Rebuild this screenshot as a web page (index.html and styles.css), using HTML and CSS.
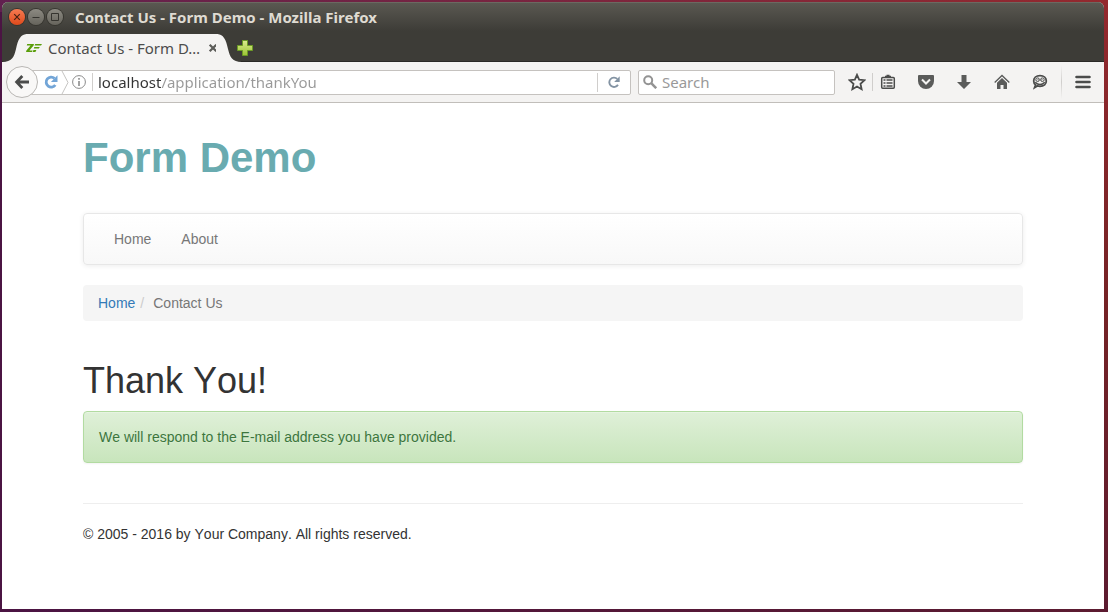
FILE: index.html
```html
<!DOCTYPE html>
<html lang="en">
<head>
<meta charset="utf-8">
<title>Contact Us - Form Demo</title>
<link rel="stylesheet" href="styles.css">
</head>
<body>
<div class="window">
  <header class="chrome">
    <div class="titlebar">
      <button class="wm wm-close" aria-label="Close window"><svg width="16" height="16" viewBox="0 0 16 16"><path d="M5.2 5.2l5.6 5.6M10.8 5.2l-5.6 5.6" stroke="#4a2213" stroke-width="1.2"/></svg></button>
      <button class="wm" aria-label="Minimize"><svg width="16" height="16" viewBox="0 0 16 16"><path d="M4.500 8.500h7" stroke="#35342f"/></svg></button>
      <button class="wm" aria-label="Maximize"><svg width="16" height="16" viewBox="0 0 16 16"><path d="M4.500 4.500h7v7h-7z" fill="none" stroke="#35342f"/></svg></button>
      <span class="window-title">Contact Us - Form Demo - Mozilla Firefox</span>
    </div>
    <div class="tabs">
      <svg width="26" height="28" viewBox="0 0 26 28"><path d="M0 28C10 28 12 23 14 15C16 6 18 0 26 0V28Z" fill="#f4f3f2"/></svg>
      <div class="tab">
        <svg width="16" height="10" viewBox="0 0 16 10"><g fill="#5a9e0a"><path d="M1.2 1H8L7.6 2.600 3.400 7.400h3.2l-.5 1.600H0l.4-1.600 4.200-4.800H.8z"/><path d="M9.2 1H16l-1 1.600H8.6zM8.3 4h5.5l-1 1.600H7.8zM7.4 7h3l-1 2H6.8z"/></g></svg>
        <span class="tab-title">Contact Us - Form D…</span>
        <button class="icon-button" aria-label="Close tab"><svg width="10" height="10" viewBox="0 0 10 10"><path d="M1.7 1.7l6.6 6.6M8.3 1.7L1.7 8.3" stroke="#5c5c59" stroke-width="2.2"/></svg></button>
      </div>
      <svg width="26" height="28" viewBox="0 0 26 28"><path d="M26 28C16 28 14 23 12 15C10 6 8 0 0 0V28Z" fill="#f4f3f2"/></svg>
      <button class="icon-button new-tab" aria-label="New tab"><svg width="16" height="16" viewBox="0 0 16 16"><defs><linearGradient id="plus" x2="0" y2="1"><stop stop-color="#dcec90"/><stop offset="1" stop-color="#9cc433"/></linearGradient></defs><path d="M5.500.5h5v5h5v5h-5v5h-5v-5h-5v-5h5z" fill="url(#plus)" stroke="#6c9b25"/></svg></button>
    </div>
    <div class="toolbar">
      <button class="back" aria-label="Back"><svg width="16" height="16" viewBox="0 0 16 16"><path d="M8.300 2L2.600 8l5.700 6M3 8h12" fill="none" stroke="#4b4c4b" stroke-width="2.800"/></svg></button>
      <form class="address">
        <svg width="14" height="14" viewBox="0 0 14 14"><path d="M11.300 10A5 5 0 1 1 10.5 3.400" fill="none" stroke="#72a5d7" stroke-width="2.800"/><path d="M13.5.3V7H6.900z" fill="#72a5d7"/></svg>
        <svg width="8" height="23" viewBox="0 0 8 23"><path d="M1 0L7 11.500L1 23" fill="none" stroke="#c5c4c2"/></svg>
        <svg width="14" height="14" viewBox="0 0 14 14"><circle cx="7" cy="7" r="6.4" fill="none" stroke="#8b8b8b" stroke-width="1"/><path d="M7 3v1.8M7 6v5" stroke="#8b8b8b" stroke-width="1.6"/></svg>
        <span class="rule url-rule"></span>
        <input class="url" type="text" aria-label="Address" value="localhost/application/thankYou">
        <button class="reload" type="button" aria-label="Reload"><svg width="12" height="12" viewBox="0 0 12 12"><path d="M10 8.800A4.700 4.700 0 1 1 9.300 2.900" fill="none" stroke="#8393a3" stroke-width="1.900"/><path d="M11.700.2V6H6.200z" fill="#8393a3"/></svg></button>
      </form>
      <form class="search">
        <svg width="14" height="14" viewBox="0 0 14 14"><circle cx="5.2" cy="5.2" r="4" fill="none" stroke="#939393" stroke-width="2"/><path d="M8.2 8.2l5 5" stroke="#939393" stroke-width="2.5"/></svg>
        <input type="search" aria-label="Search" placeholder="Search">
      </form>
      <div class="actions">
        <button class="tool tool-small" aria-label="Bookmark this page"><svg width="18" height="18" viewBox="0 0 16 16"><path d="M8 1.600l1.900 4.300 4.700.5-3.500 3.200 1 4.800L8 12l-4.100 2.400 1-4.800L1.400 6.400l4.700-.5z" fill="none" stroke="#4b4c4b" stroke-width="1.600"/></svg></button>
        <span class="rule"></span>
        <button class="tool tool-small" aria-label="Bookmarks"><svg width="16" height="16" viewBox="0 0 16 16"><path d="M5 3V1.800h1.500V.8h3v1H11V3z" fill="#4b4c4b"/><rect x="1.700" y="3.500" width="12.600" height="10.800" rx="1" fill="none" stroke="#4b4c4b" stroke-width="1.500"/><path d="M3.500 6h2M3.500 9h2M3.500 12h2M6.500 6h6M6.500 9h6M6.500 12h6" stroke="#4b4c4b" stroke-width="1.400"/></svg></button>
        <button class="tool pocket" aria-label="Save to Pocket"><svg width="16" height="16" viewBox="0 0 16 16"><path d="M1 1h14q1 0 1 1v5a8 8 0 0 1-16 0V2q0-1 1-1z" fill="#5a5b5a"/><path d="M4 5.5l4 4 4-4" fill="none" stroke="#f4f3f2" stroke-width="2"/></svg></button>
        <button class="tool" aria-label="Downloads"><svg width="16" height="16" viewBox="0 0 16 16"><path d="M5.500 1h5v7H15l-7 7-7-7h4.500z" fill="#5a5b5a"/></svg></button>
        <button class="tool" aria-label="Home"><svg width="16" height="16" viewBox="0 0 16 16"><path d="M.7 8.4L8 1.5l7.3 6.900" fill="none" stroke="#5a5b5a" stroke-width="1.400"/><path d="M3 8.800l5-4.700 5 4.700V15H9.5v-4h-3v4H3z" fill="#5a5b5a"/></svg></button>
        <button class="tool" aria-label="Start a conversation"><svg width="16" height="16" viewBox="0 0 16 16"><path d="M8 1.700c3.900 0 6.300 2.300 6.300 5.300s-2.400 5.300-6.300 5.300q-1.500 0-2.700-.4L2.600 13.600l1-2.700Q1.700 9.300 1.700 7c0-3 2.400-5.300 6.300-5.300z" fill="#f4f3f2" stroke="#4b4c4b" stroke-width="1.800"/><path d="M3.200 8.300q4.800 4.600 9.600 0" fill="none" stroke="#4b4c4b" stroke-width="1.500"/><circle cx="5.600" cy="5.700" r="1.800" fill="#f4f3f2" stroke="#4b4c4b"/><circle cx="10.400" cy="5.700" r="1.800" fill="#f4f3f2" stroke="#4b4c4b"/><path d="M5.500 5.700h1M9.500 5.700h1" stroke="#4b4c4b"/></svg></button>
        <span class="rule rule-tall"></span>
        <button class="tool menu" aria-label="Open menu"><svg width="16" height="14" viewBox="0 0 16 14"><path d="M1.500 2h13M1.500 7h13M1.500 12h13" stroke="#4b4c4b" stroke-width="2.600" stroke-linecap="round"/></svg></button>
      </div>
    </div>
  </header>
  <main class="page">
    <div class="container">
      <h1 class="brand">Form Demo</h1>
      <nav class="navbar"><a href="#">Home</a><a href="#">About</a></nav>
      <ol class="breadcrumb"><li><a href="#">Home</a></li><li class="current">Contact Us</li></ol>
      <h2 class="heading">Thank You!</h2>
      <div class="alert">We will respond to the E-mail address you have provided.</div>
      <footer class="footer">© 2005 - 2016 by Your Company. All rights reserved.</footer>
    </div>
  </main>
</div>
</body>
</html>
```
FILE: styles.css
```css
* { box-sizing: border-box; }
body {
  margin: 0;
  min-height: 100vh;
  display: flex;
  padding: 2px 4px 3px 2px;
  background: linear-gradient(to right, #4b1443, #5c1b30) bottom / 100% 3px no-repeat,
    linear-gradient(#93292e, #752326 50%, #5c1b30) right / 4px 100% no-repeat,
    linear-gradient(to right, #61204f, #93292e) top / 100% 12px no-repeat,
    #4b1443;
  font-family: "Liberation Sans", Arial, sans-serif;
  font-size: 14px;
  line-height: 20px;
  font-kerning: none;
  color: #333;
}
svg { display: block; flex: none; }
button { border: 0; padding: 0; background: none; display: flex; align-items: center; justify-content: center; flex: none; }
input { border: 0; padding: 0; outline: 0; background: none; width: 100%; min-width: 0; flex: 1; font: inherit; }
a { text-decoration: none; color: #337ab7; }

.window { flex: 1; min-width: 0; display: flex; flex-direction: column; background: #fff; border-radius: 6px 6px 0 0; overflow: hidden; }
.chrome { font-family: "Noto Sans", sans-serif; font-size: 15px; font-kerning: auto; }
.titlebar { display: flex; align-items: center; height: 32px; padding: 0 7px 3px; gap: 3px; background: linear-gradient(#5b5952, #3d3c37 29px); box-shadow: inset 0 1px #6b6961; }
.wm { width: 16px; height: 16px; border-radius: 50%; background: linear-gradient(#8c8a82, #66645c); box-shadow: 0 0 0 1px #36352f; }
.wm-close { background: linear-gradient(#f67b52, #df4a1b); }
.window-title { margin-left: 9px; font-size: 15px; font-weight: 700; color: #dfdbd2; white-space: nowrap; }
.tabs { display: flex; height: 28px; background: #3d3c37; box-shadow: inset 0 -1px #2a2926; }
.tab { display: flex; align-items: center; width: 192px; margin: 0 -2px; background: #f4f3f2; color: #4c4c4c; }
.tab-title { flex: 1; margin-left: 6px; white-space: nowrap; }
.new-tab { margin-left: -5px; }
.icon-button { align-self: center; }

.toolbar { display: flex; align-items: center; height: 41px; padding-left: 4px; background: #f4f3f2; border-bottom: 1px solid #c1beba; }
.back { width: 32px; height: 32px; border: 1px solid #b9b7b4; border-radius: 50%; background: #f9f8f7; position: relative; }
.address, .search { display: flex; align-items: center; height: 25px; background: #fff; border: 1px solid #c5c2bf; border-radius: 2px; }
.address { flex: 1; min-width: 0; margin-left: -8px; padding-left: 13px; gap: 3px; }
.url { padding-left: 2px; background: linear-gradient(to right, #333 65px, #999 65px); background-clip: text; -webkit-background-clip: text; color: transparent; }
.url-rule { margin-left: 3px; }
.search { flex: 0 1 197px; min-width: 0; margin-left: 7px; padding: 0 4px; gap: 5px; }
.search input::placeholder { color: #999; opacity: 1; }
.reload { width: 33px; height: 19px; border-left: 1px solid #d0cecc; }
.rule { width: 1px; height: 18px; background: #d0cecc; flex: none; }
.rule-tall { height: 34px; margin-left: 2px; background: linear-gradient(transparent, #d0cecc 50%, transparent); }
.actions { display: flex; align-items: center; margin-left: 7px; flex: none; }
.tool { width: 38px; height: 32px; }
.tool-small { width: 30px; }
.pocket { margin-left: 4px; }
.menu { width: 42px; }

.page { flex: 1; padding: 0 20px; }
.container { max-width: 940px; margin: 0 auto; }
.brand { margin: 0; padding: 32px 0; font-size: 42px; line-height: 46px; font-weight: 700; color: #69abb0; }
.navbar { display: flex; min-height: 52px; padding: 0 15px; border: 1px solid #e7e7e7; border-radius: 4px; background: linear-gradient(#fff, #f8f8f8); box-shadow: 0 1px 5px rgba(0, 0, 0, .075); }
.navbar a { padding: 15px; color: #777; }
.breadcrumb { display: flex; list-style: none; margin: 20px 0 40px; padding: 8px 15px; border-radius: 4px; background: #f5f5f5; }
.current { color: #777; }
.current::before { content: "/"; padding: 0 9px 0 5px; color: #ccc; }
.heading { margin: 0 0 10px; font-size: 36px; line-height: 40px; font-weight: 400; }
.alert { padding: 15px; border: 1px solid #b2dba1; border-radius: 4px; color: #3c763d; background: linear-gradient(#dff0d8, #c8e5bc); box-shadow: inset 0 1px 0 rgba(255, 255, 255, .25), 0 1px 2px rgba(0, 0, 0, .05); text-shadow: 0 1px 0 rgba(255, 255, 255, .2); }
.footer { margin-top: 40px; padding: 20px 0; border-top: 1px solid #eee; }
```
